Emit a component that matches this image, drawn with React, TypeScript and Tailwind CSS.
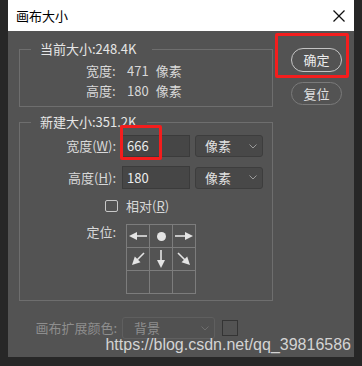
import React from 'react';

const font = { fontFamily: '"Noto Sans CJK SC", "Noto Sans", sans-serif' };

function Chevron({ dim }: { dim?: boolean }) {
  return (
    <svg width="8" height="5" viewBox="0 0 8 5" className="shrink-0">
      <polyline points="0.5,0.5 4,4 7.5,0.5" fill="none" stroke={dim ? '#6e6e6e' : '#9a9a9a'} strokeWidth="1" />
    </svg>
  );
}

function UnitSelect() {
  return (
    <div className="w-[68px] h-[22px] bg-[#484848] border border-[#3d3d3d] rounded-[3px] flex items-center justify-between pl-[9px] pr-[5px] text-[13px] text-[#e2e2e2]">
      <span>像素</span>
      <Chevron />
    </div>
  );
}

function Arrow({ dir }: { dir: 'l' | 'r' | 'd' | 'dl' | 'dr' }) {
  const rot = { r: 0, l: 180, d: 90, dl: 135, dr: 45 }[dir];
  const len = dir === 'dl' || dir === 'dr' ? 17 : 18;
  const tip = 11 + len / 2;
  return (
    <svg width="22" height="22" viewBox="0 0 22 22">
      <g transform={`rotate(${rot} 11 11)`}>
        <line x1={11 - len / 2} y1="11" x2={tip - 6} y2="11" stroke="#e4e4e4" strokeWidth="1.6" />
        <polygon points={`${tip},11 ${tip - 8},7 ${tip - 8},15`} fill="#e4e4e4" />
      </g>
    </svg>
  );
}

function AnchorGrid() {
  const cells: React.ReactNode[] = [
    <Arrow dir="l" />,
    <div className="w-[9px] h-[9px] rounded-full bg-[#e4e4e4]" />,
    <Arrow dir="r" />,
    <Arrow dir="dl" />,
    <Arrow dir="d" />,
    <Arrow dir="dr" />,
    null,
    null,
    null,
  ];
  return (
    <div className="grid grid-cols-[22px_22px_22px] grid-rows-[22px_22px_22px] gap-px bg-[#7c7c7c] border border-[#7c7c7c] w-fit">
      {cells.map((c, i) => (
        <div key={i} className="bg-[#535353] flex items-center justify-center">
          {c}
        </div>
      ))}
    </div>
  );
}

export default function App() {
  return (
    <div className="relative w-[362px] h-[366px] bg-[#272727] px-[8px] overflow-hidden" style={font}>
      {/* title bar */}
      <div className="h-[31px] bg-white flex items-center justify-between pl-[8px] pr-[9px]">
        <span className="text-[13px] text-black leading-none">画布大小</span>
        <svg width="12" height="12" viewBox="0 0 12 12">
          <line x1="0.5" y1="0.5" x2="11.5" y2="11.5" stroke="#111" strokeWidth="1.2" />
          <line x1="11.5" y1="0.5" x2="0.5" y2="11.5" stroke="#111" strokeWidth="1.2" />
        </svg>
      </div>

      {/* body */}
      <div className="h-[326px] bg-[#535353] pl-[11px] pt-[17px]">
        <div className="flex">
          {/* current size */}
          <div className="relative mt-[1px] w-[254px] h-[58px] border border-[#6e6e6e] pt-[11px] text-[13px] text-[#d8d8d8]">
            <span className="absolute left-[11px] -top-[9px] bg-[#535353] pl-[9px] pr-[15px] leading-[16px] text-[#e6e6e6]">
              当前大小:248.4K
            </span>
            {[
              ['宽度:', '471'],
              ['高度:', '180'],
            ].map(([k, v]) => (
              <div key={k} className="flex h-[20px] items-center pl-[66px]">
                <span className="w-[41px]">{k}</span>
                <span>{v}</span>
                <span className="ml-[7px]">像素</span>
              </div>
            ))}
          </div>

          {/* buttons */}
          <div className="ml-[18px] flex flex-col gap-[10px]">
            <div className="w-[51px] h-[24px] rounded-full border-[1.5px] border-[#c4c4c4] flex items-center justify-center text-[13px] text-[#ececec]">
              确定
            </div>
            <div className="w-[51px] h-[23px] rounded-full border border-[#7a7a7a] flex items-center justify-center text-[13px] text-[#e0e0e0]">
              复位
            </div>
          </div>
        </div>

        {/* new size */}
        <div className="relative mt-[15px] w-[254px] h-[179px] border border-[#6e6e6e] pt-[12px] text-[13px] text-[#d8d8d8]">
          <span className="absolute left-[11px] -top-[9px] bg-[#535353] pl-[9px] pr-[10px] leading-[16px] text-[#e6e6e6]">
            新建大小:351.2K
          </span>

          <div className="flex items-center">
            <span className="w-[96px] text-right">
              宽度(<span className="underline">W</span>):
            </span>
            <div className="ml-[6px] w-[68px] h-[22px] bg-[#464646] border border-[#3b3b3b] pl-[4px] flex items-center text-[#ececec]">
              666
            </div>
            <div className="ml-[5px]">
              <UnitSelect />
            </div>
          </div>

          <div className="flex items-center mt-[9px]">
            <span className="w-[96px] text-right">
              高度(<span className="underline">H</span>):
            </span>
            <div className="ml-[6px] w-[68px] h-[23px] bg-[#464646] border border-[#3b3b3b] pl-[4px] flex items-center text-[#ececec]">
              180
            </div>
            <div className="ml-[5px]">
              <UnitSelect />
            </div>
          </div>

          <div className="flex items-center h-[16px] mt-[9px]">
            <div className="w-[98px] flex justify-end">
              <div className="w-[13px] h-[12px] border border-[#c8c8c8] rounded-[2px]" />
            </div>
            <span className="ml-[8px]">
              相对(<span className="underline">R</span>)
            </span>
          </div>

          <div className="flex mt-[10px]">
            <span className="w-[96px] text-right leading-[16px]">定位:</span>
            <div className="ml-[10px]">
              <AnchorGrid />
            </div>
          </div>
        </div>

        {/* extension colour */}
        <div className="flex items-center mt-[16px] -ml-[11px] text-[13px] text-[#8e8e8e]">
          <span className="w-[109px] text-right">画布扩展颜色:</span>
          <div className="ml-[5px] w-[93px] h-[22px] border border-[#5f5f5f] rounded-[3px] bg-[#515151] flex items-center justify-between pl-[11px] pr-[5px]">
            <span>背景</span>
            <Chevron dim />
          </div>
          <div className="ml-[7px] w-[16px] h-[16px] border border-[#343434]" />
        </div>
      </div>

      {/* annotations */}
      <div className="absolute left-[275px] top-[33px] w-[74px] h-[45px] border-[3px] border-[#f41d1d] rounded-[2px]" />
      <div className="absolute left-[120px] top-[125px] w-[42px] h-[35px] border-[3px] border-[#f41d1d] rounded-[2px]" />

      {/* watermark */}
      <div
        className="absolute right-[11px] top-[335px] text-[16px] leading-[20px] text-[#d4d4d4]"
        style={{ fontFamily: '"Liberation Sans", Arial, sans-serif' }}
      >
        https://blog.csdn.net/qq_39816586
      </div>
    </div>
  );
}
